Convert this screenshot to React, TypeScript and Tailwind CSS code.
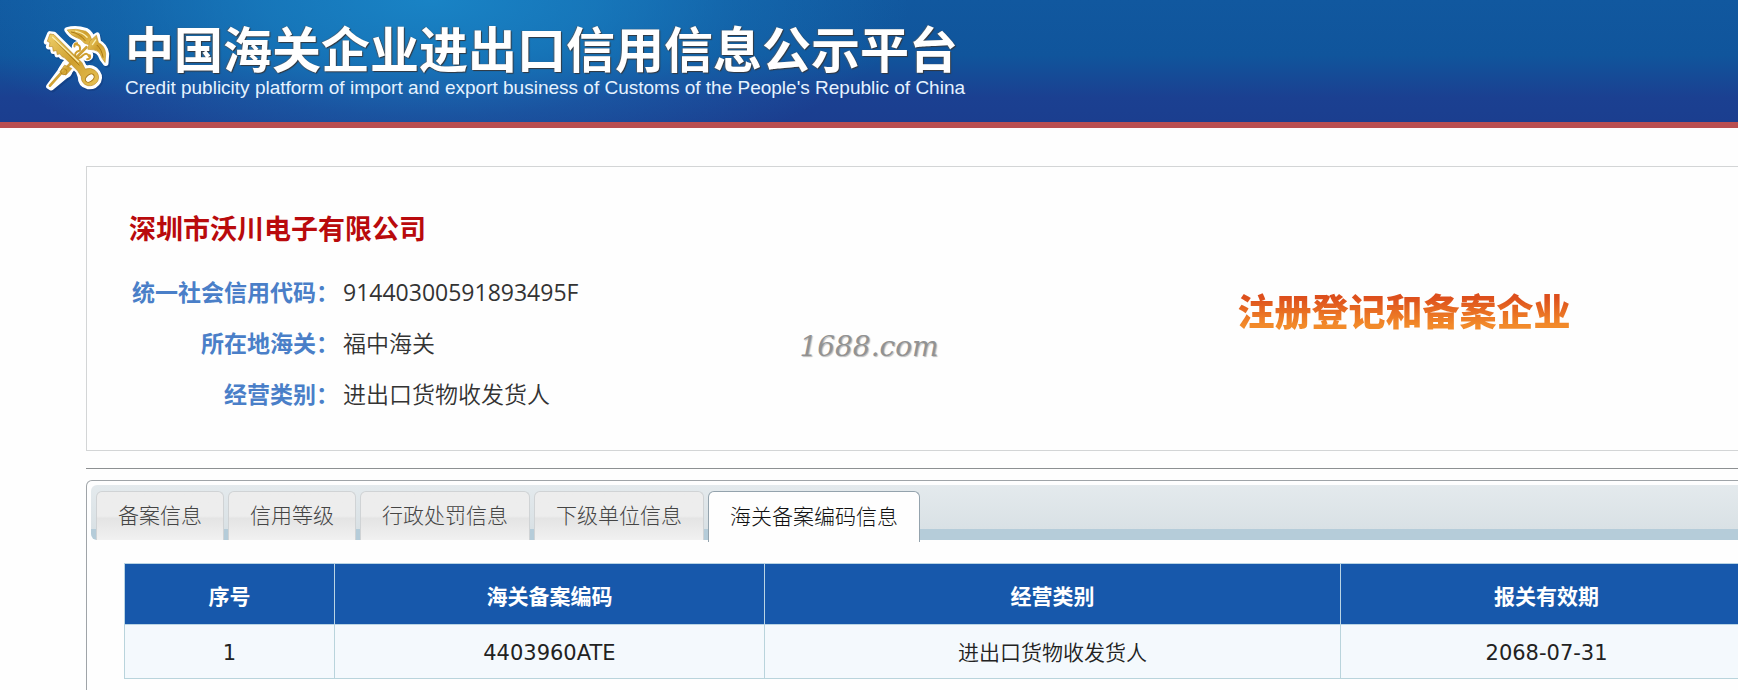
import { useState } from 'react'

const companyInfo = [
  { label: '统一社会信用代码', value: '91440300591893495F', weight: 'font-normal' },
  { label: '所在地海关', value: '福中海关', weight: 'font-[350]' },
  { label: '经营类别', value: '进出口货物收发货人', weight: 'font-[350]' },
]

const tabs = ['备案信息', '信用等级', '行政处罚信息', '下级单位信息', '海关备案编码信息']

const columns = [
  { title: '序号', width: 'w-[12.9%]', weight: 'font-normal' },
  { title: '海关备案编码', width: 'w-[26.4%]', weight: 'font-normal' },
  { title: '经营类别', width: 'w-[35.4%]', weight: 'font-[350]' },
  { title: '报关有效期', width: 'w-[25.3%]', weight: 'font-normal' },
]

const rows = [['1', '4403960ATE', '进出口货物收发货人', '2068-07-31']]

// Key crossed with a winged staff
function CustomsEmblem() {
  const outline = (
    <>
      <path d="M57 224 L90 180 L104 156 L150 112 L172 92 L186 98 L168 120 L128 168 L112 188 L64 228 Z" />
      <path d="M112 54 Q138 46 168 56 Q184 64 186 84 L176 98 L160 92 Q150 80 138 76 Q122 70 112 54 Z" />
      <path d="M180 84 L202 70 L206 92 Q226 102 230 126 L228 154 Q216 142 212 128 Q206 116 192 114 L178 110 Z" />
      <path d="M60 66 L72 68 L154 148 L166 172 Q180 164 196 174 Q214 190 206 208 Q196 226 174 224 Q152 218 152 194 L146 178 L104 136 L96 134 L90 126 L82 128 L80 116 L70 118 L68 104 L56 104 L60 92 L50 90 Z" />
      <circle cx="144" cy="106" r="10" />
      <circle cx="172" cy="130" r="10" />
      <circle cx="106" cy="178" r="13" />
    </>
  )
  return (
    <svg viewBox="30 30 220 220" className="h-[73px] w-[73px] shrink-0" aria-hidden="true">
      <defs>
        <linearGradient id="gold" x1="0" y1="0" x2="1" y2="1">
          <stop offset="0" stopColor="#eed06a" />
          <stop offset="0.5" stopColor="#cf9f2e" />
          <stop offset="1" stopColor="#e6c052" />
        </linearGradient>
      </defs>
      <g fill="#0e2f6d" stroke="#0e2f6d" strokeWidth="18" strokeLinejoin="round" opacity="0.35" transform="translate(4 5)">
        {outline}
      </g>
      <g fill="#fff" stroke="#fff" strokeWidth="17" strokeLinejoin="round">
        {outline}
      </g>
      {/* staff */}
      <path d="M60 222 L92 186 L170 106" fill="none" stroke="#d0a235" strokeWidth="8" strokeLinecap="round" />
      <path d="M90 180 L104 160 L126 170 L108 190 Z" fill="url(#gold)" stroke="#b8892a" strokeWidth="2" />
      <circle cx="102" cy="180" r="9" fill="url(#gold)" stroke="#a87716" strokeWidth="2" />
      {/* snakes */}
      <g fill="none" stroke="#cf9f2e" strokeWidth="6" strokeLinecap="round">
        <path d="M138 98 Q154 98 150 116 Q130 122 138 136 Q150 144 160 130 Q172 120 178 134" />
        <path d="M134 104 Q132 94 142 94 M180 130 Q184 142 172 142" />
      </g>
      {/* wings */}
      <g fill="url(#gold)" stroke="#c39429" strokeWidth="2" strokeLinejoin="round">
        <path d="M112 54 Q138 48 168 58 Q182 66 186 84 L176 98 L164 94 Q154 80 138 76 Q122 70 112 54 Z" />
        <path d="M180 88 L200 70 L206 92 Q226 102 228 126 L226 152 Q216 140 212 128 Q206 116 192 114 L174 112 Z" />
      </g>
      {/* key */}
      <path
        d="M60 66 L72 68 L156 152 L166 172 Q182 166 196 176 Q212 190 204 208 Q194 224 174 222 Q154 216 154 194 L144 178 L104 138 L96 134 L90 126 L82 128 L80 116 L70 118 L68 104 L58 104 L60 92 L52 88 Z"
        fill="url(#gold)"
        stroke="#b8892a"
        strokeWidth="2"
        strokeLinejoin="round"
      />
      <ellipse cx="180" cy="199" rx="15" ry="10" fill="#fffdf5" stroke="#a87716" strokeWidth="3" transform="rotate(-40 180 199)" />
      <g fill="none" stroke="#a87716" strokeWidth="3" strokeLinecap="round">
        <path d="M76 86 L148 160" />
        <path d="M124 60 Q150 64 166 86" />
        <path d="M202 100 Q216 112 220 136" />
      </g>
      <g fill="none" stroke="#fbeeb0" strokeWidth="4" strokeLinecap="round">
        <path d="M68 76 L146 150" />
        <path d="M138 58 Q160 62 172 76" />
        <path d="M188 98 L198 84" />
      </g>
    </svg>
  )
}

export default function App() {
  const [activeTab, setActiveTab] = useState(4)

  return (
    <div className="relative flex min-h-screen flex-col overflow-x-hidden bg-[#fefefe] font-['Open_Sans','Noto_Sans_CJK_SC',sans-serif]">
      {/* Banner */}
      <header className="border-b-6 border-[#b94e50] bg-[radial-gradient(ellipse_480px_180px_at_430px_0px,#1983c5_0%,#1983c5b3_35%,#1983c54d_65%,#1983c500_100%),linear-gradient(to_bottom,#11589f_0%,#10559c_45%,#1b4091_80%,#1b3e8f_100%)]">
        <div className="flex h-[122px] items-start pt-[22px] pl-10">
          <CustomsEmblem />
          <div className="ml-3 whitespace-nowrap text-white">
            <h1 className="font-['Liberation_Sans','Noto_Sans_CJK_SC',sans-serif] text-[49px] leading-[58px] font-bold [text-shadow:1px_1px_1px_#33383f,-1px_0px_1px_#4a5a68]">
              中国海关企业进出口信用信息公示平台
            </h1>
            <p className="font-['Liberation_Sans',sans-serif] text-[19px] leading-4 text-[#e6f3ff]">
              Credit publicity platform of import and export business of Customs of the People's Republic of China
            </p>
          </div>
        </div>
      </header>

      <main className="-mr-[52px] ml-[86px] flex flex-1 flex-col pt-[38px]">
        {/* Company card */}
        <section className="flex border border-[#d3d5d6]">
          <div className="flex-1 pt-[42px] pb-[30px] pl-[42px]">
            <h2 className="text-[27px] leading-10 font-bold text-[#b90a0c]">深圳市沃川电子有限公司</h2>
            <dl className="mt-[18px]">
              {companyInfo.map((item) => (
                <div key={item.label} className="flex gap-1 text-[23px] leading-[51px]">
                  <dt className="w-[210px] text-right font-bold text-[#4a7fc8]">{item.label}：</dt>
                  <dd className={`text-[#333] ${item.weight}`}>{item.value}</dd>
                </div>
              ))}
            </dl>
          </div>
          <div className="flex w-[45%] items-center justify-center pt-1.5 pr-1">
            <strong className="bg-linear-to-b from-[#dd4f1c] from-25% to-[#f28a2a] to-75% bg-clip-text text-[37px] font-black text-transparent">
              注册登记和备案企业
            </strong>
          </div>
        </section>

        <hr className="mt-[17px] border-[#8d9092]" />

        {/* Tabs */}
        <section className="mt-[11px] flex-1 rounded-t-md border border-b-0 border-[#9fa4a8] p-1">
          <div
            role="tablist"
            className="flex h-[55px] items-start gap-1 rounded-md bg-linear-to-b from-[#e4eaed] from-0% via-[#d9e1e5] via-80% to-[#b5ccd9] to-80% pt-1.5 pl-[5px]"
          >
            {tabs.map((tab, i) => (
              <button
                key={tab}
                role="tab"
                aria-selected={i === activeTab}
                onClick={() => setActiveTab(i)}
                className={`rounded-t-md border border-b-0 px-[21px] text-[21px] font-light whitespace-nowrap ${
                  i === activeTab
                    ? 'h-[51px] border-[#94a3ad] bg-[#fefefe] text-[#111]'
                    : 'h-[49px] border-[#d0d3d5] bg-linear-to-b from-[#ededed] from-50% via-[#e4e4e4] via-55% to-[#f1f1f1] text-[#444]'
                }`}
              >
                {tab}
              </button>
            ))}
          </div>

          <div role="tabpanel" className="pt-[23px] pr-8 pl-[33px]">
            <table className="w-full table-fixed border-collapse text-center font-['DejaVu_Sans','Noto_Sans_CJK_SC',sans-serif] text-[21px]">
              <thead>
                <tr className="h-[61px] bg-[#1758ab] text-white">
                  {columns.map((col) => (
                    <th key={col.title} className={`border border-[#b9d4e4] pt-1 font-['Noto_Sans_CJK_SC',sans-serif] font-bold ${col.width}`}>
                      {col.title}
                    </th>
                  ))}
                </tr>
              </thead>
              <tbody>
                {rows.map((row) => (
                  <tr key={row[0]} className="h-[54px] bg-[#f4f9fd] text-[#222]">
                    {row.map((cell, i) => (
                      <td key={i} className={`border border-[#b9d4dc] pt-1 ${columns[i].weight}`}>
                        {cell}
                      </td>
                    ))}
                  </tr>
                ))}
              </tbody>
            </table>
          </div>
        </section>
      </main>

      {/* Watermark */}
      <div className="pointer-events-none absolute inset-0 flex items-center justify-center pt-1">
        <span className="font-['DejaVu_Serif',serif] text-[28px] text-[#929292] italic [text-shadow:1px_1px_1px_#bbb]">
          1688.com
        </span>
      </div>
    </div>
  )
}
